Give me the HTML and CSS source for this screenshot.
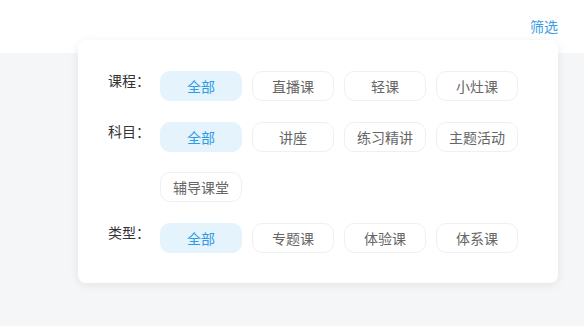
FILE: index.html
```html
<!DOCTYPE html>
<html lang="zh-CN">
<head>
    <meta charset="UTF-8">
    <meta name="viewport" content="width=device-width, initial-scale=1.0">
    <title>筛选</title>
    <link rel="stylesheet" href="styles.css">
</head>
<body>
    <header class="top-bar">
        <span class="filter-toggle">筛选</span>
    </header>

    <div class="filter-panel">
        <div class="filter-group">
            <span class="filter-label">课程：</span>
            <div class="filter-options">
                <button class="option active">全部</button>
                <button class="option">直播课</button>
                <button class="option">轻课</button>
                <button class="option">小灶课</button>
            </div>
        </div>
        <div class="filter-group">
            <span class="filter-label">科目：</span>
            <div class="filter-options">
                <button class="option active">全部</button>
                <button class="option">讲座</button>
                <button class="option">练习精讲</button>
                <button class="option">主题活动</button>
                <button class="option">辅导课堂</button>
            </div>
        </div>
        <div class="filter-group">
            <span class="filter-label">类型：</span>
            <div class="filter-options">
                <button class="option active">全部</button>
                <button class="option">专题课</button>
                <button class="option">体验课</button>
                <button class="option">体系课</button>
            </div>
        </div>
    </div>
</body>
</html>
```

FILE: styles.css
```css
* {
    box-sizing: border-box;
    margin: 0;
    padding: 0;
    font-family: "Noto Sans CJK SC", "Noto Sans", sans-serif;
}

body {
    background-color: #f5f6f8;
    color: #333;
    height: 326px;
    overflow: hidden;
    position: relative;
}

.top-bar {
    height: 53px;
    background: #fff;
    display: flex;
    justify-content: flex-end;
    padding: 16px 26px 0 0;
}

.filter-toggle {
    font-size: 14px;
    line-height: 20px;
    color: #3a9ee4;
}

.filter-panel {
    position: absolute;
    left: 78px;
    top: 40px;
    width: 480px;
    height: 243px;
    background: #fff;
    border-radius: 8px;
    box-shadow: 0 2px 10px rgba(0, 0, 0, 0.08);
    padding: 31px 30px 0 30px;
    display: flex;
    flex-direction: column;
    gap: 21px;
}

.filter-group {
    display: flex;
    align-items: flex-start;
}

.filter-label {
    width: 52px;
    flex-shrink: 0;
    font-size: 14px;
    line-height: 19px;
    color: #333;
}

.filter-options {
    display: flex;
    flex-wrap: wrap;
    gap: 20px 10px;
    width: 368px;
}

.option {
    width: 82px;
    height: 30px;
    border: 1px solid #f0f0f0;
    border-radius: 10px;
    background: #fff;
    font-size: 14px;
    color: #666;
    cursor: pointer;
}

.option.active {
    background: #e4f3fc;
    border-color: #e4f3fc;
    color: #2f9be3;
}
```
